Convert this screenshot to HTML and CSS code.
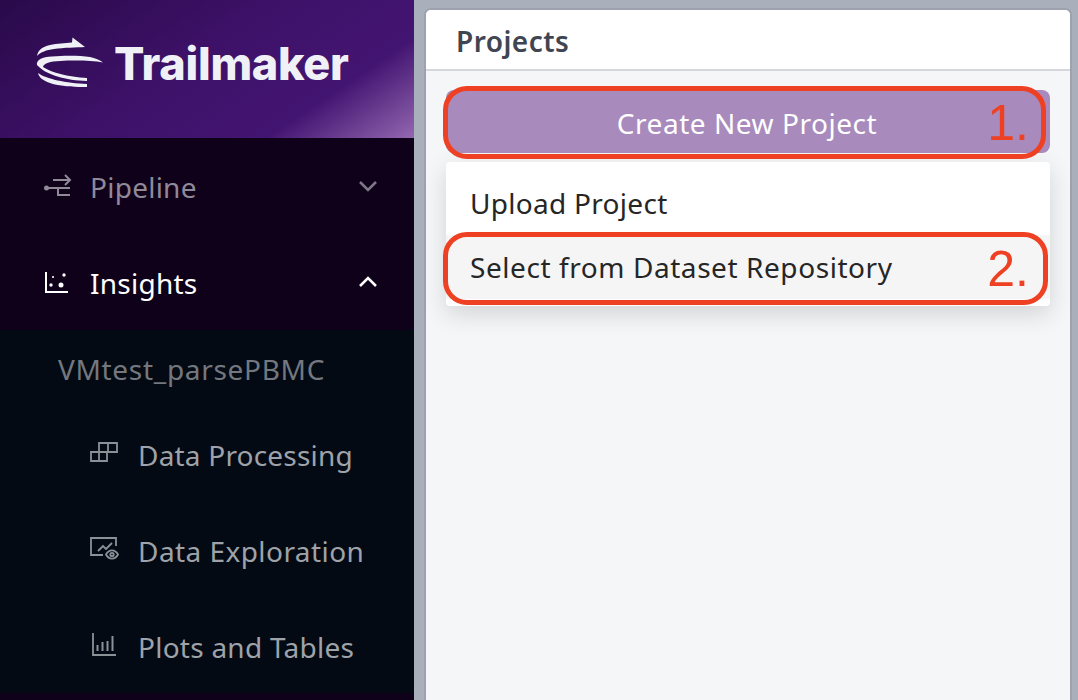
FILE: index.html
```html
<!DOCTYPE html>
<html lang="en">
<head>
<meta charset="utf-8">
<title>Trailmaker Projects</title>
<link rel="stylesheet" href="styles.css">
</head>
<body>
<div class="app">
  <aside class="sidebar">
    <div class="brand">
      <svg class="logo" width="68" height="52" viewBox="36 36 68 52">
        <path d="M37 56 C38 50 42 47 50 45 C57 43.500 65 43 72 42.500 L72.500 37.500 L85 47 C76 47.500 64 47.500 54 49 C46 50 41 52 37 56Z" fill="#f0f1f6"/>
        <path d="M37 65 C36 60 42 57 52 56.500 C64 55.500 80 55.500 90 57 C95 58 100 60 103 62.500 C92 60.500 75 60 60 61 C50 61.500 44 63 43 67 C50 72 68 77 87 78 L87 81 C66 80.500 46 75 37 65Z" fill="#f0f1f6"/>
        <path d="M38 73 C46 79 66 83 87 84 L87 87 C64 87.500 40 84 38 73Z" fill="#f0f1f6"/>
      </svg>
      <span class="brand-name">Trailmaker</span>
    </div>
    <div class="nav-row">
      <svg class="nav-icon" width="28" height="28" viewBox="0 0 28 28" fill="none" stroke="#8f8998" stroke-width="2">
        <circle cx="3.500" cy="16" r="2.500" fill="#8f8998" stroke="none"/>
        <path d="M4 16H27M15 16V23H27"/>
        <path d="M10 8H27M22 3L27 8L22 13"/>
      </svg>
      <span class="nav-label nav-label-wide">Pipeline</span>
      <svg class="chev" width="20" height="12" viewBox="0 0 20 12" fill="none" stroke="#7e7888" stroke-width="2.500"><path d="M2 2L10 10L18 2"/></svg>
    </div>
    <div class="nav-row active">
      <svg class="nav-icon" width="28" height="28" viewBox="0 0 28 28" fill="none" stroke="#fff" stroke-width="2">
        <path d="M3 4V24H25"/>
        <g fill="#fff" stroke="none"><circle cx="8" cy="17" r="1.700"/><circle cx="10" cy="9" r="1.100"/><circle cx="18" cy="17" r="2.500"/><circle cx="21" cy="7" r="1.700"/></g>
      </svg>
      <span class="nav-label nav-label-wide">Insights</span>
      <svg class="chev" width="20" height="12" viewBox="0 0 20 12" fill="none" stroke="#fff" stroke-width="2.500"><path d="M2 10L10 2L18 10"/></svg>
    </div>
    <div class="submenu">
      <div class="project-name">VMtest_parsePBMC</div>
      <div class="sub-row">
        <svg width="28" height="28" viewBox="0 0 28 28" fill="none" stroke="#8c9097" stroke-width="1.800"><path d="M1 11H17V20H1ZM9 11V20M9 11V2H27V11H17M18 2V11"/></svg>
        <span class="sub-a">Data Processing</span>
      </div>
      <div class="sub-row">
        <svg width="28" height="28" viewBox="0 0 28 28" fill="none" stroke="#8c9097" stroke-width="1.800"><path d="M13 18H1V1H26V9"/><path d="M8 14L13 9L16 12L22 6"/><path d="M16 17.500C19 12 25 12 28 17.500C25 23 19 23 16 17.500Z"/><circle cx="22" cy="17.500" r="1.700"/></svg>
        <span class="sub-b">Data Exploration</span>
      </div>
      <div class="sub-row">
        <svg width="28" height="28" viewBox="0 0 28 28" fill="none" stroke="#8c9097" stroke-width="1.800"><path d="M3 0V22H26"/><path d="M7.500 12V18M12.500 9V18M17.500 8V18M22.500 3V18" stroke-width="2"/></svg>
        <span class="sub-c">Plots and Tables</span>
      </div>
    </div>
  </aside>
  <main class="panel">
    <header class="panel-head">Projects</header>
    <div class="panel-body">
      <div class="create-wrap">
        <button class="create-btn" type="button">Create New Project</button>
        <div class="callout callout-one"><span class="callout-num">1.</span></div>
      </div>
      <div class="menu">
        <div class="menu-item item-upload">Upload Project</div>
        <div class="menu-item hover"><span class="item-select">Select from Dataset Repository</span>
          <div class="callout callout-two"><span class="callout-num">2.</span></div>
        </div>
      </div>
    </div>
  </main>
</div>
</body>
</html>
```
FILE: styles.css
```css
* { box-sizing: border-box; }
html, body { margin: 0; height: 100%; overflow: hidden; }
body { font-family: "Noto Sans", sans-serif; background: #a9afbb; }
.app { display: flex; height: 700px; }
.sidebar { width: 414px; flex: none; background: #10011a; display: flex; flex-direction: column; }
.brand {
  height: 138px; display: flex; align-items: center; padding-left: 36px; gap: 10px;
  background: linear-gradient(146deg, #2a0a4a 0%, #3d1168 45%, #431572 76%, #9367b0 100%);
}
.logo { flex: none; margin-top: -14px; }
.brand-name { font-family: "Inter", sans-serif; font-size: 45px; font-weight: 800; color: #f0f1f6; line-height: 1; margin-top: -11px; letter-spacing: -.3px; }
.nav-row { height: 96px; flex: none; display: flex; align-items: center; padding-left: 39px; padding-right: 36px; }
.nav-row .nav-icon { flex: none; margin-left: 4px; margin-right: 19px; overflow: visible; }
.nav-label { flex: 1; font-size: 28px; color: #8f8998; padding-top: 2px; }
.nav-label-wide { letter-spacing: .25px; }
.active .nav-label { color: #fff; }
.submenu { height: 363px; flex: none; overflow: hidden; background: #030a14; }
.project-name { height: 77px; padding-left: 58px; padding-top: 20px; font-size: 28px; color: #74787e; letter-spacing: .69px; }
.sub-row { height: 96px; display: flex; align-items: center; padding-left: 90px; gap: 20px; font-size: 28px; color: #9fa2a8; }
.sub-row svg { flex: none; overflow: visible; }
.sub-a { letter-spacing: .2px; }
.sub-b { letter-spacing: .44px; }
.sub-c { letter-spacing: .25px; }
.panel { width: 644px; margin: 10px 8px 0 12px; background: #f5f6f8; border-radius: 5px 5px 0 0; display: flex; flex-direction: column; box-shadow: 0 0 0 2px #9da2ae; }
.panel-head { height: 61px; background: #fff; border-bottom: 2px solid #d5d7dc; border-radius: 5px 5px 0 0; padding: 12px 30px 0; font-size: 28px; font-weight: 600; line-height: 38px; color: #3f4652; letter-spacing: .45px; }
.panel-body { padding: 19px 20px; }
.create-wrap { position: relative; }
.create-btn { display: block; width: 100%; height: 63px; border: 0; border-radius: 8px; background: #a88bbc; color: #fff; font: 400 28px "Noto Sans", sans-serif; letter-spacing: .55px; padding: 2px 2px 0 0; }
.callout { position: absolute; border: 5px solid #ee4023; border-radius: 24px; display: flex; align-items: center; justify-content: flex-end; pointer-events: none; }
.callout-num { font-family: "Liberation Sans", sans-serif; font-size: 50px; color: #ee4023; line-height: 1; }
.callout-one { left: -3px; top: -4px; right: 4px; height: 73px; padding-right: 12px; }
.menu { margin-top: 9px; background: #fff; border-radius: 4px; height: 144px; padding-top: 9px; box-shadow: 0 8px 24px rgba(0,0,0,.14); }
.menu-item { position: relative; height: 64px; line-height: 64px; padding-left: 24px; font-size: 28px; color: #262626; }
.item-upload { letter-spacing: .29px; }
.item-select { letter-spacing: .57px; }
.menu-item.hover { background: #f5f5f5; }
.callout-two { left: -3px; top: -3px; right: 2px; height: 73px; padding-right: 14px; }
```
